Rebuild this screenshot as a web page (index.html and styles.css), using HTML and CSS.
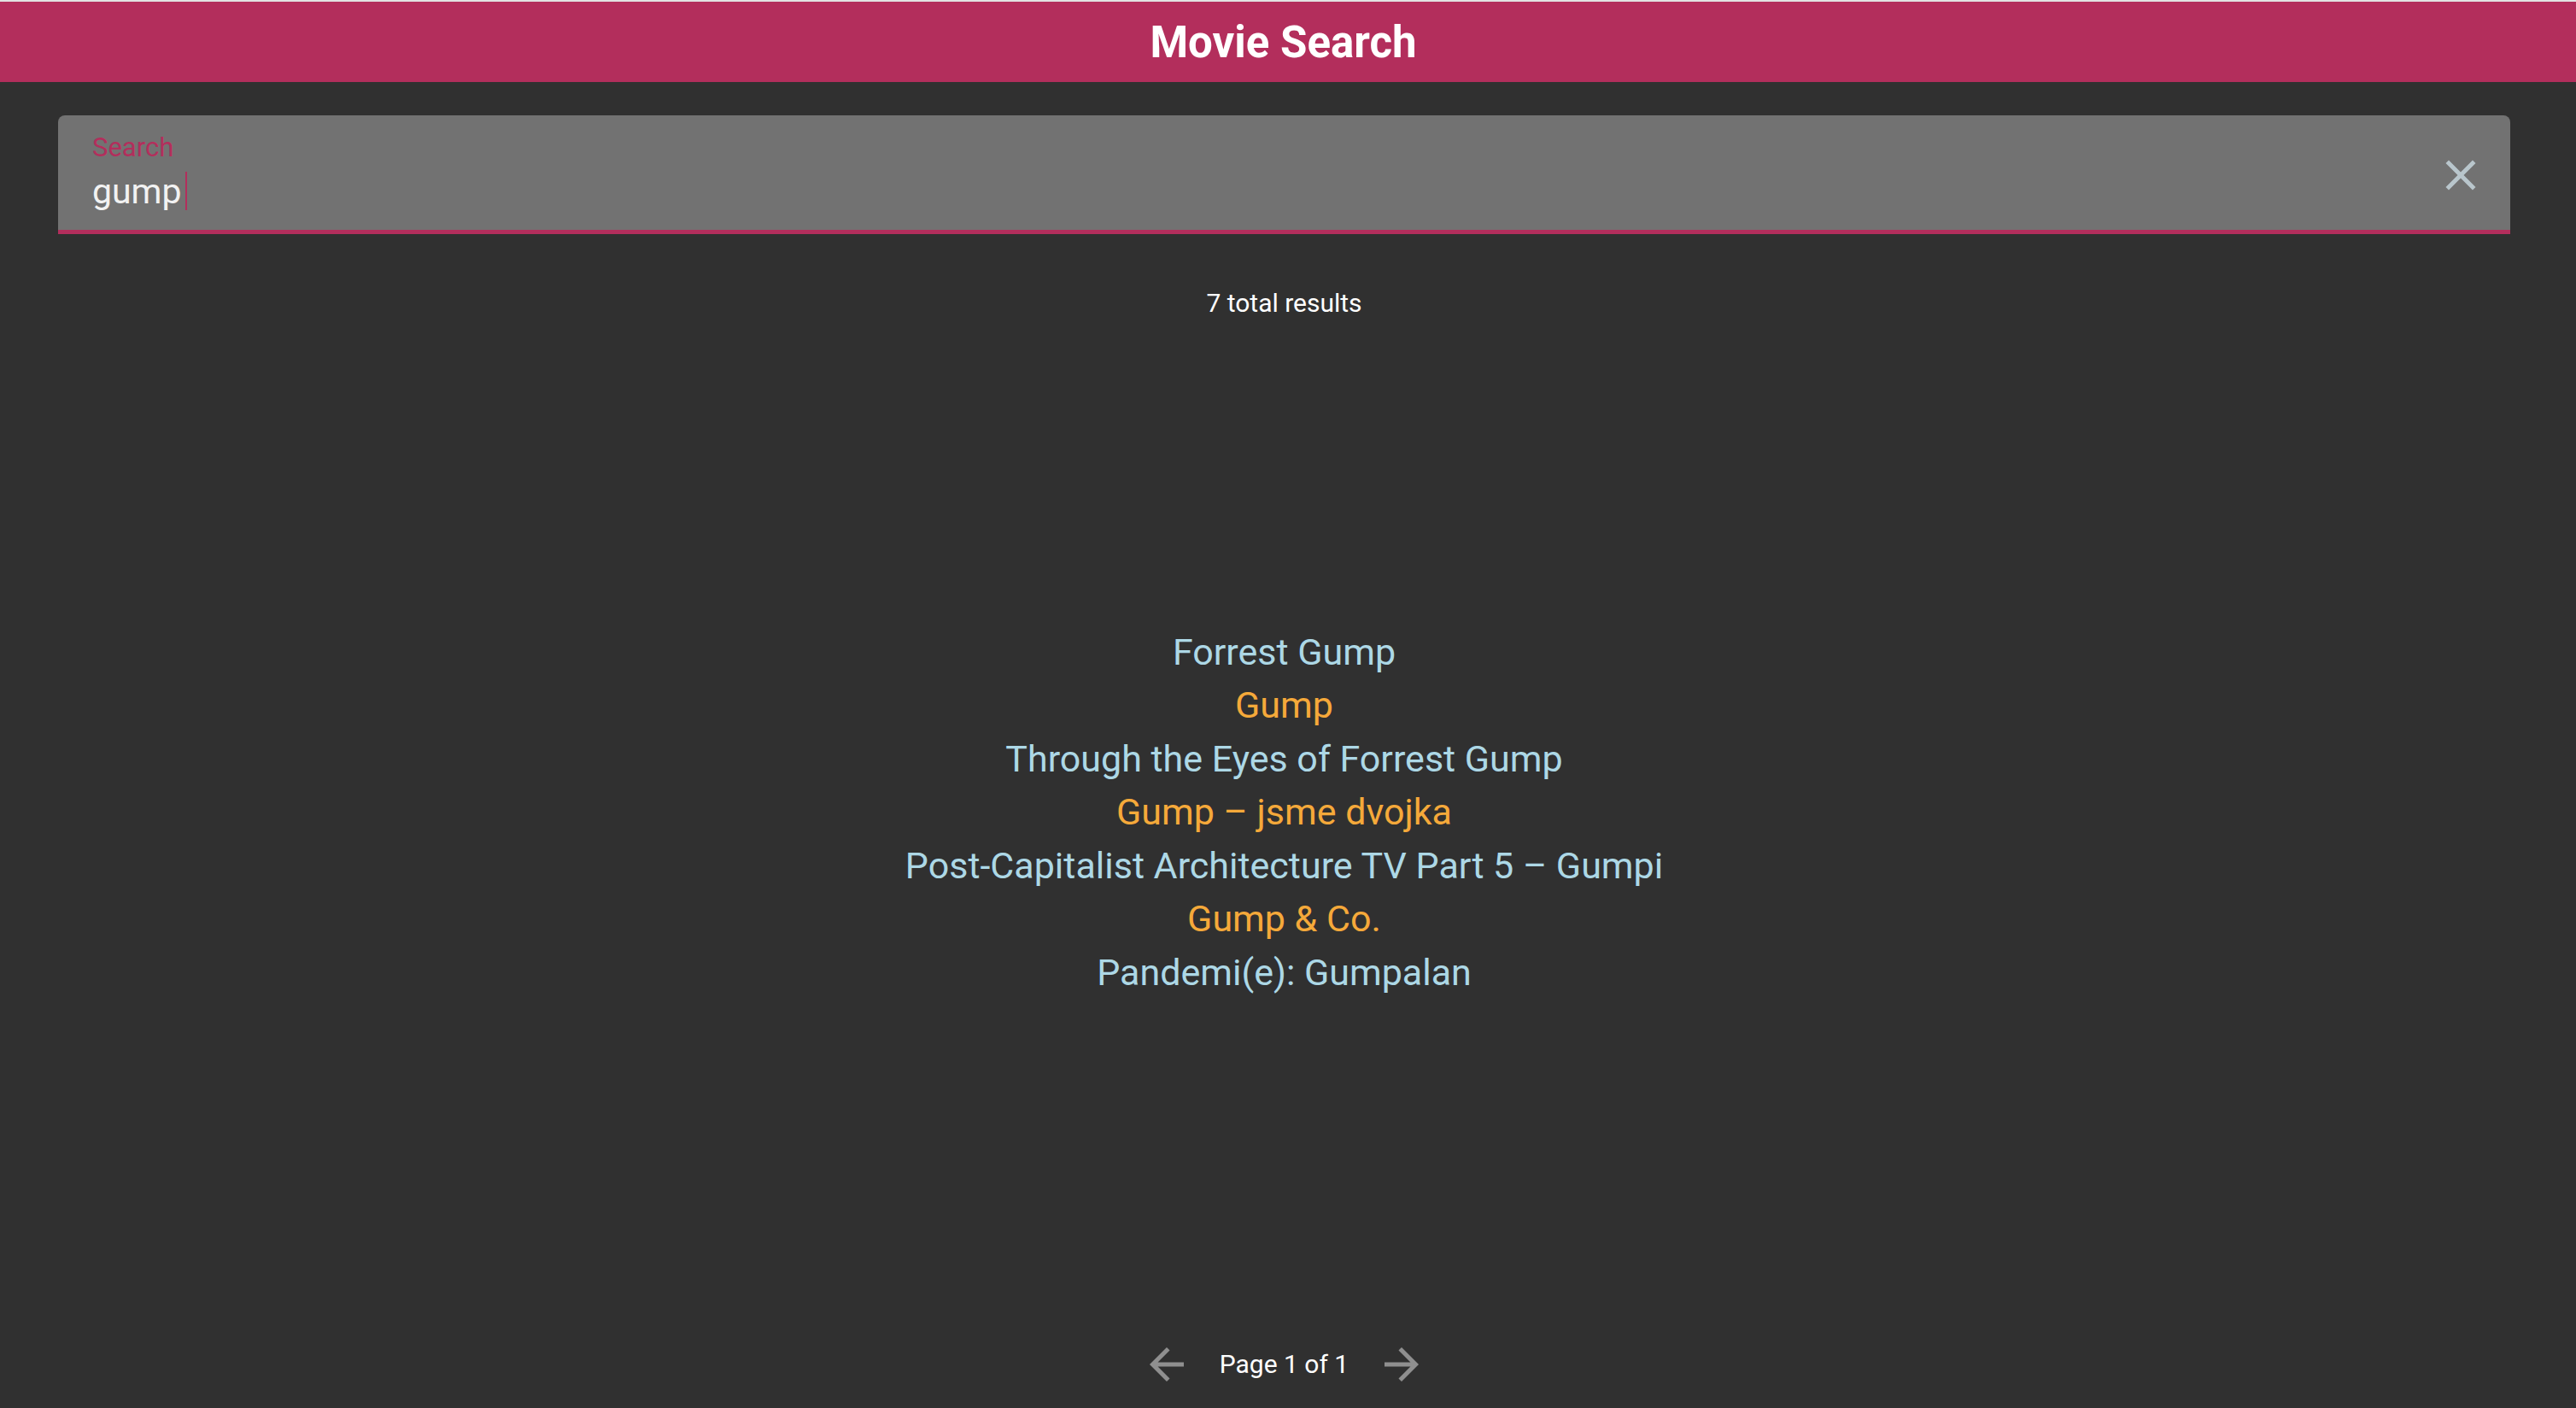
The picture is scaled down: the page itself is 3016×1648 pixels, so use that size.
FILE: index.html
```html
<!DOCTYPE html>
<html lang="en">
<head>
<meta charset="utf-8">
<title>Movie Search</title>
<link rel="stylesheet" href="styles.css">
</head>
<body>
<div class="app">
  <header class="app-bar">
    <h1 class="app-title">Movie Search</h1>
  </header>
  <main class="content">
    <div class="search-field">
      <div class="search-body">
        <label class="search-label">Search</label>
        <div class="search-value">gump<span class="caret"></span></div>
      </div>
      <svg class="clear-icon" viewBox="0 0 24 24" aria-hidden="true"><path d="M19 6.41L17.59 5 12 10.59 6.41 5 5 6.41 10.59 12 5 17.59 6.41 19 12 13.41 17.59 19 19 17.59 13.41 12z"/></svg>
    </div>
    <p class="total">7 total results</p>
    <section class="results">
      <ul class="result-list">
        <li class="result odd">Forrest Gump</li>
        <li class="result even">Gump</li>
        <li class="result odd">Through the Eyes of Forrest Gump</li>
        <li class="result even">Gump – jsme dvojka</li>
        <li class="result odd">Post-Capitalist Architecture TV Part 5 – Gumpi</li>
        <li class="result even">Gump &amp; Co.</li>
        <li class="result odd">Pandemi(e): Gumpalan</li>
      </ul>
    </section>
    <nav class="pager">
      <svg class="pager-icon" viewBox="0 0 24 24" aria-hidden="true"><path d="M20 11H7.83l5.59-5.59L12 4l-8 8 8 8 1.41-1.41L7.83 13H20v-2z"/></svg>
      <span class="pager-text">Page 1 of 1</span>
      <svg class="pager-icon" viewBox="0 0 24 24" aria-hidden="true"><path d="M12 4l-1.41 1.41L16.17 11H4v2h12.17l-5.58 5.59L12 20l8-8z"/></svg>
    </nav>
  </main>
</div>
</body>
</html>
```
FILE: styles.css
```css
html, body {
  margin: 0;
  padding: 0;
  height: 100%;
}
body {
  background: #303030;
  font-family: Roboto, "Liberation Sans", Arial, sans-serif;
  color: #ffffff;
  border-top: 2px solid #e2e2e2;
  box-sizing: border-box;
  overflow: hidden;
}
.app {
  display: flex;
  flex-direction: column;
  height: 100%;
}
.app-bar {
  height: 94px;
  background: #b32e5c;
  display: flex;
  align-items: center;
  justify-content: center;
  padding-right: 11px;
  flex: none;
}
.app-title {
  margin: 0;
  font-size: 51px;
  line-height: 1;
  font-weight: 700;
  color: #ffffff;
}
.content {
  flex: 1;
  display: flex;
  flex-direction: column;
  padding: 39px 77px 21px 68px;
  min-height: 0;
}
.search-field {
  display: flex;
  align-items: center;
  background: #727272;
  border-radius: 8px 8px 0 0;
  border-bottom: 5px solid #b32e5c;
  padding: 22px 28px 25px 40px;
}
.search-body {
  flex: 1;
  display: flex;
  flex-direction: column;
  gap: 16px;
}
.search-label {
  font-size: 31px;
  line-height: 1;
  color: #b32e5c;
}
.search-value {
  font-size: 41px;
  line-height: 40px;
  color: #f2f2f2;
  display: flex;
  align-items: center;
}
.caret {
  display: inline-block;
  width: 2px;
  height: 45px;
  margin: -3px 0 -2px 4px;
  background: #b32e5c;
}
.clear-icon {
  width: 60px;
  height: 60px;
  fill: #b9c6cc;
  margin-top: 8px;
}
.total {
  margin: 66px 0 0;
  font-size: 30px;
  line-height: 1;
  text-align: center;
  color: #ffffff;
}
.results {
  flex: 1;
  display: flex;
  flex-direction: column;
  justify-content: center;
  padding-bottom: 36px;
}
.result-list {
  list-style: none;
  margin: 0;
  padding: 0;
  text-align: center;
}
.result {
  font-size: 43px;
  line-height: 62.5px;
}
.result.odd {
  color: #add8e6;
}
.result.even {
  color: #f5a93a;
}
.pager {
  display: flex;
  align-items: center;
  justify-content: center;
  gap: 32px;
  height: 60px;
}
.pager-icon {
  width: 60px;
  height: 60px;
  fill: #8f8f8f;
}
.pager-text {
  font-size: 30px;
  line-height: 1;
  color: #ffffff;
}
```
